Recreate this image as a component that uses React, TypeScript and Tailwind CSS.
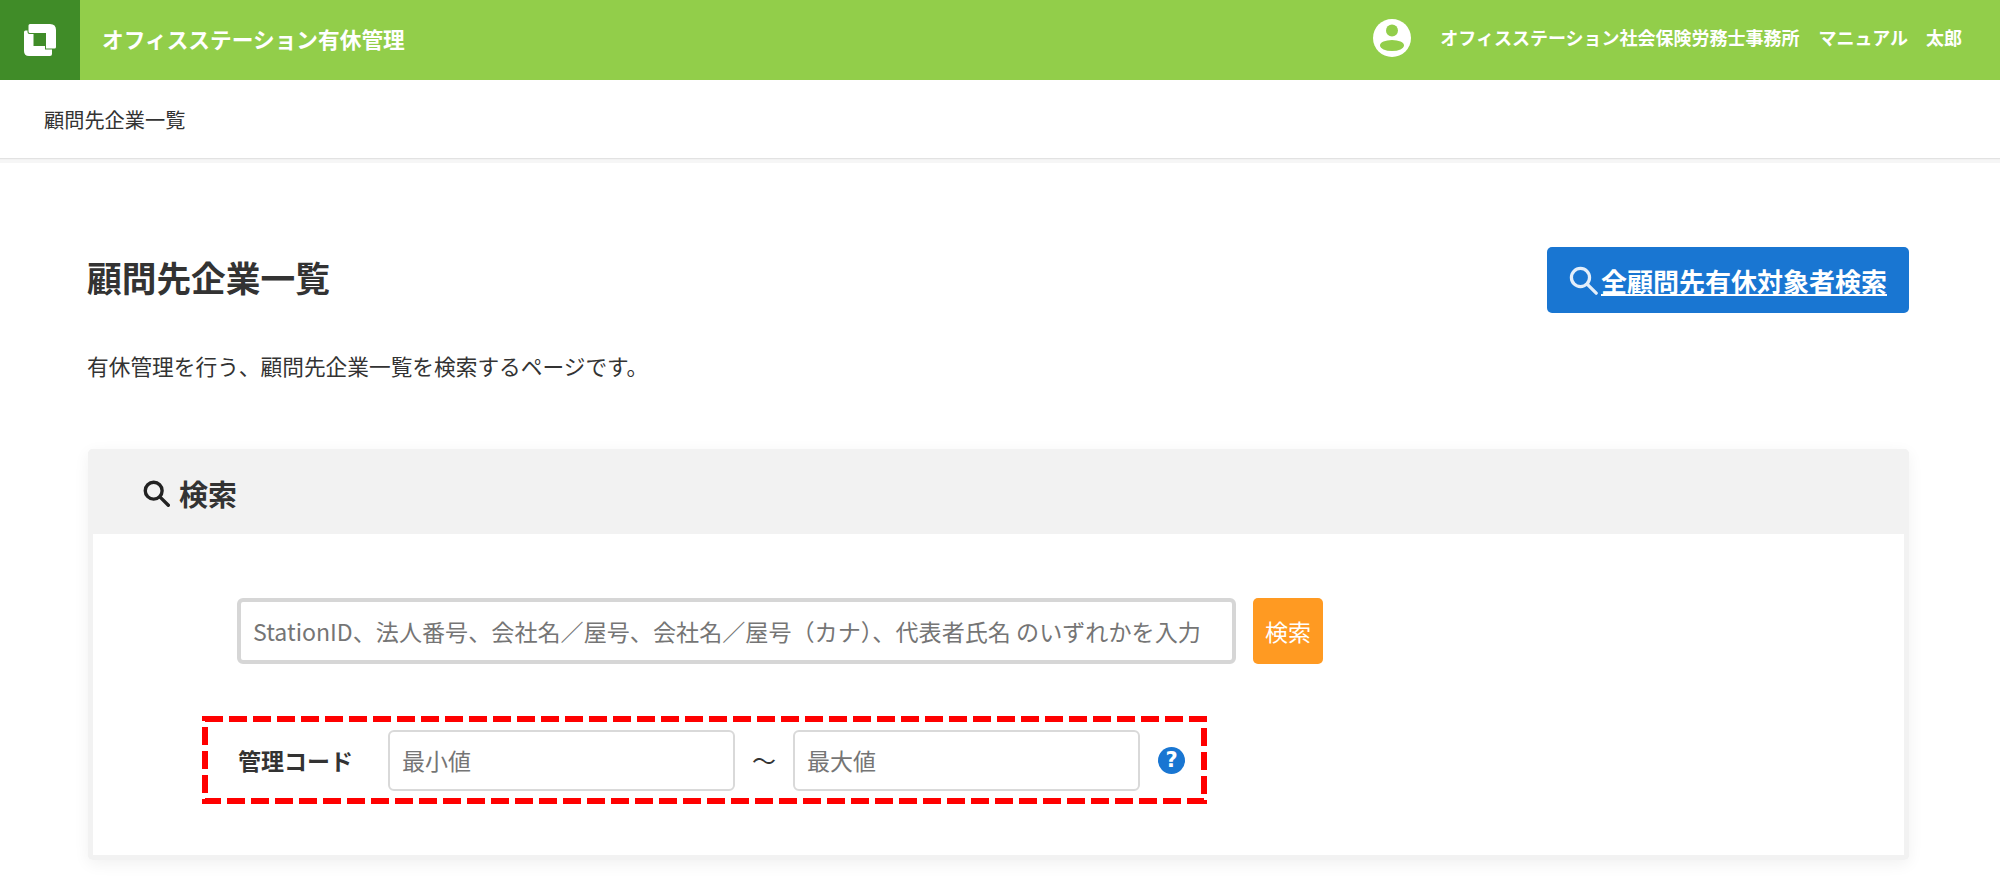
const jp = "font-['Noto_Sans_CJK_JP',sans-serif]";

const SearchIcon = ({ className, strokeWidth = 2.4 }: { className: string; strokeWidth?: number }) => (
  <svg viewBox="0 0 24 24" fill="none" stroke="currentColor" strokeWidth={strokeWidth} strokeLinecap="round" className={className}>
    <circle cx="9.5" cy="9.5" r="7.5" />
    <path d="M15 15l7.5 7.5" />
  </svg>
);

const Logo = () => (
  <svg viewBox="0 0 32 32" className="size-8" fill="#fff">
    <path d="M6 0H26Q32 0 32 6V23Q32 24.5 30.5 24.5H22V9H6Q4.5 9 4.5 7.5V1.5Q4.5 0 6 0Z" />
    <path d="M1.5 6.5H3.5V8Q3.5 10 5.5 10H9.5V22H21V25.5H28V30Q28 32 26 32H5Q0 32 0 27V8Q0 6.5 1.5 6.5Z" />
  </svg>
);

const Avatar = () => (
  <svg viewBox="0 0 38 38" className="size-[38px]">
    <circle cx="19" cy="19" r="19" fill="#fff" />
    <circle cx="19" cy="11.5" r="6" fill="#92ce4a" />
    <ellipse cx="19" cy="26.5" rx="12" ry="5.5" fill="#92ce4a" />
  </svg>
);

const HelpIcon = () => (
  <span className="flex size-[27px] items-center justify-center rounded-full bg-[#1976d2] text-[21px] leading-none font-bold text-white font-['DejaVu_Sans',sans-serif]">
    ?
  </span>
);

export default function App() {
  return (
    <div className={`min-h-[885px] overflow-hidden bg-white text-[#333] ${jp}`}>
      <header className="flex h-20 items-center bg-[#92ce4a] text-white">
        <div className="flex size-20 items-center justify-center bg-[#408c28]">
          <Logo />
        </div>
        <div className="ml-[22px] -mt-px text-[21.7px] font-bold">オフィスステーション有休管理</div>
        <div className="ml-auto flex items-center pr-[38px] pb-1">
          <Avatar />
          <span className="ml-[29px] -mt-[2px] text-[18px] font-bold">オフィスステーション社会保険労務士事務所</span>
          <span className="ml-[19px] -mt-[2px] text-[18px] font-bold">マニュアル</span>
          <span className="ml-[18px] -mt-[2px] text-[18px] font-bold">太郎</span>
        </div>
      </header>

      <nav className="flex h-[78px] items-center pt-[3px] pl-11 text-[20.2px] shadow-[0_1px_1px_#e2e2e2,0_5px_0_#f6f6f6]">
        顧問先企業一覧
      </nav>

      <main className="pr-[91px] pl-[88px]">
        <div className="mt-[89px] flex items-start justify-between">
          <h1 className="mt-2 -ml-px text-[34.7px] leading-[44px] font-bold">顧問先企業一覧</h1>
          <a className="flex h-[66px] w-[362px] items-center justify-center gap-[3px] rounded-[5px] bg-[#1976d2] text-[26px] font-bold text-white underline">
            <SearchIcon className="size-[29px] text-[#e3eefa]" strokeWidth={2.7} />
            全顧問先有休対象者検索
          </a>
        </div>

        <p className="mt-[37px] -ml-px text-[21.7px] leading-8">有休管理を行う、顧問先企業一覧を検索するページです。</p>

        <section className="mt-[67px] rounded-[5px] border-[5px] border-t-0 border-[#f2f2f2] shadow-[0_4px_16px_rgba(0,0,0,0.06)]">
          <div className="-mx-[5px] flex h-[85px] items-center gap-[9px] rounded-t-[5px] bg-[#f2f2f2] pt-1 pl-[55px]">
            <SearchIcon className="size-[27px] text-[#222]" strokeWidth={3} />
            <h2 className="text-[29px] font-bold">検索</h2>
          </div>

          <div className="pt-16 pb-[51px] pl-[144px]">
            <div className="flex gap-[17px]">
              <input
                placeholder="StationID、法人番号、会社名／屋号、会社名／屋号（カナ）、代表者氏名 のいずれかを入力"
                className="h-[66px] w-[999px] rounded-[6px] border-4 border-[#d6d6d6] px-3 text-[23.1px] outline-none placeholder:text-[#757575]"
              />
              <button className="h-[66px] w-[70px] rounded-[5px] bg-[#ff9a22] text-[23px] text-white">検索</button>
            </div>

            <div className="relative mt-[52px] -ml-[35px] flex h-[88px] w-[1005px] items-center pl-[36px]">
              <label className="w-[150px] text-[23px] font-bold">管理コード</label>
              <input placeholder="最小値" className="h-[61px] w-[347px] rounded-[6px] border-2 border-[#d9d9d9] px-[12px] text-[23px] outline-none placeholder:text-[#757575]" />
              <span className="w-[58px] text-center text-[24px]">～</span>
              <input placeholder="最大値" className="h-[61px] w-[347px] rounded-[6px] border-2 border-[#d9d9d9] px-[12px] text-[23px] outline-none placeholder:text-[#757575]" />
              <span className="ml-[18px]">
                <HelpIcon />
              </span>
              <svg className="absolute inset-0 h-full w-full" fill="none">
                <rect x="3" y="3" width="999" height="82" stroke="#f00" strokeWidth="6" strokeDasharray="18 6" />
              </svg>
            </div>
          </div>
        </section>
      </main>
    </div>
  );
}
